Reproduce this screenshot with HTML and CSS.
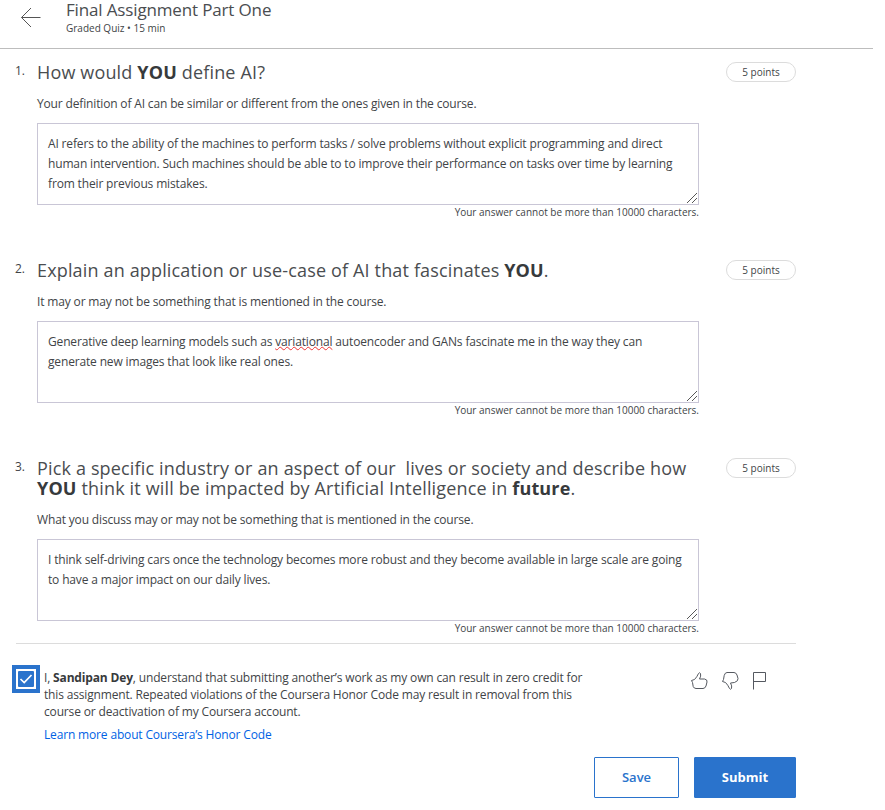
FILE: index.html
```html
<!DOCTYPE html>
<html lang="en">
<head>
<meta charset="utf-8">
<title>Final Assignment Part One</title>
<link rel="stylesheet" href="styles.css">
</head>
<body>
<header class="header">
  <svg class="back" width="22" height="22" viewBox="0 0 22 22"><path d="M20.5 10.500H1.500M11 1L1.500 10.500L11 20"/></svg>
  <div>
    <h1 class="title">Final Assignment Part One</h1>
    <p class="subtitle">Graded Quiz • 15 min</p>
  </div>
</header>
<main class="quiz">
  <section class="question">
    <span class="number">1.</span>
    <div class="body">
      <h2 class="prompt">How would <b>YOU</b> define AI?</h2>
      <p class="hint">Your definition of AI can be similar or different from the ones given in the course.</p>
      <div class="answer">AI refers to the ability of the machines to perform tasks / solve problems without explicit programming and direct<br>human intervention. Such machines should be able to to improve their performance on tasks over time by learning<br>from their previous mistakes.<svg class="grip" width="12" height="12" viewBox="0 0 12 12"><path d="M1 11L11 1M6 11L11 6"/></svg></div>
      <p class="limit">Your answer cannot be more than 10000 characters.</p>
    </div>
    <span class="points">5 points</span>
  </section>
  <section class="question">
    <span class="number">2.</span>
    <div class="body">
      <h2 class="prompt">Explain an application or use-case of AI that fascinates <b>YOU</b>.</h2>
      <p class="hint">It may or may not be something that is mentioned in the course.</p>
      <div class="answer">Generative deep learning models such as <span class="misspelled">variational</span> autoencoder and GANs fascinate me in the way they can<br>generate new images that look like real ones.<svg class="grip" width="12" height="12" viewBox="0 0 12 12"><path d="M1 11L11 1M6 11L11 6"/></svg></div>
      <p class="limit">Your answer cannot be more than 10000 characters.</p>
    </div>
    <span class="points">5 points</span>
  </section>
  <section class="question">
    <span class="number">3.</span>
    <div class="body">
      <h2 class="prompt">Pick a specific industry or an aspect of our &nbsp;lives or society and describe how<br><b>YOU</b> think it will be impacted by Artificial Intelligence in <b>future</b>.</h2>
      <p class="hint">What you discuss may or may not be something that is mentioned in the course.</p>
      <div class="answer">I think self-driving cars once the technology becomes more robust and they become available in large scale are going<br>to have a major impact on our daily lives.<svg class="grip" width="12" height="12" viewBox="0 0 12 12"><path d="M1 11L11 1M6 11L11 6"/></svg></div>
      <p class="limit">Your answer cannot be more than 10000 characters.</p>
    </div>
    <span class="points">5 points</span>
  </section>
</main>
<footer class="footer">
  <div class="honor">
    <svg class="check" width="28" height="28" viewBox="0 0 28 28"><path class="blue" d="M0 0H28V28H0Z"/><path class="white" d="M4 4H24V24H4Z"/><rect class="blue" x="6" y="6" width="16" height="16" rx="1"/><path class="tick" d="M8.500 14L12.200 17.500L19.500 10"/></svg>
    <div class="pledge">
      <p>I, <b>Sandipan Dey</b>, understand that submitting another’s work as my own can result in zero credit for<br>this assignment. Repeated violations of the Coursera Honor Code may result in removal from this<br>course or deactivation of my Coursera account.</p>
      <a class="link">Learn more about Coursera’s Honor Code</a>
    </div>
    <div class="feedback">
      <svg width="17" height="18" viewBox="0 0 17 18"><path d="M.5 8.500L3.500 7.500Q6 5 7.500 1.500Q8.500 0 9.500 1.500Q10.300 4 8.500 7H13.500Q16.500 7.500 16 10L15 14Q14 16.500 12 16.500H5Q3 16.500 2.200 14.500L1.500 10.500Z"/></svg>
      <svg width="17" height="18" viewBox="0 0 17 18"><path d="M.5 9.500L3.500 10.500Q6 13 7.500 16.500Q8.500 18 9.500 16.500Q10.300 14 8.500 11L12.500 10.500Q16.500 9 16 6.500L15 3Q14 .5 12 .5H5Q3 .5 2.200 3.500L1.500 7.500Z"/></svg>
      <svg width="14" height="18" viewBox="0 0 14 18"><path d="M.5 17.500V.5H12.500V9.500H.5"/></svg>
    </div>
  </div>
  <div class="actions">
    <button class="button">Save</button>
    <button class="button primary">Submit</button>
  </div>
</footer>
</body>
</html>
```

FILE: styles.css
```css
* { box-sizing: border-box; }
body { margin: 0; background: #fff; color: #414447; font-family: "Open Sans", sans-serif; }
h1, h2, p { margin: 0; font-weight: 400; }
b { font-weight: 700; color: #373a3c; }
svg { fill: none; flex: none; }
.header { display: flex; width: 873px; height: 49px; border-bottom: 1px solid #bdbdbd; }
.back { margin: 7px 24px 0 20px; stroke: #555; stroke-width: 1; }
.title { font-size: 17px; line-height: 20px; white-space: nowrap; letter-spacing: -.15px; color: #4a4d50; }
.subtitle { font-size: 10px; line-height: 16px; white-space: nowrap; }
.quiz { width: 781px; margin-left: 15px; padding: 13px 0 0 1px; height: 595px; background: linear-gradient(#dcdcdc, #dcdcdc) 1px 100% / 780px 1px no-repeat; }
.question { display: flex; height: 198px; align-items: flex-start; }
.number { width: 22px; margin-left: -1px; font-size: 12px; line-height: 18px; letter-spacing: -.155px; }
.body { width: 662px; white-space: nowrap; }
.prompt { font-size: 18px; line-height: 20px; letter-spacing: .155px; color: #4a4d50; }
.hint { font-size: 12px; line-height: 20px; margin: 12px 0 9px; letter-spacing: -.155px; }
.answer { position: relative; height: 82px; border: 1px solid #c9c6d6; padding: 10px; font-size: 12px; line-height: 20px; letter-spacing: -.155px; }
.grip { position: absolute; right: 0; bottom: 0; stroke: #444; stroke-width: .9; }
.misspelled { text-decoration: underline wavy #e33 .8px; text-underline-offset: 0; text-decoration-skip-ink: none; }
.limit { font-size: 10px; line-height: 14px; text-align: right; }
.points { width: 70px; height: 20px; margin-left: 27px; border: 1px solid #dcdcdc; border-radius: 10px; font-size: 10px; line-height: 19px; text-align: center; }
.footer { width: 796px; padding-left: 12px; }
.honor { display: flex; padding-top: 21px; height: 113px; }
.pledge { width: 651px; padding: 4px 0 0 4px; font-size: 12px; line-height: 17px; white-space: nowrap; letter-spacing: -.16px; }
.link { display: block; margin-top: 6px; color: #0062e4; }
.feedback { display: flex; gap: 14px; padding-top: 7px; }
.feedback svg { stroke: #555960; stroke-width: 1; }
.actions { display: flex; justify-content: flex-end; gap: 15px; }
.button { width: 85px; height: 41px; padding: 0 0 2px; border: 1px solid #2a73cc; border-radius: 1px; background: #fff; color: #2a73cc; font: 600 13px "Open Sans", sans-serif; }
.primary { width: 102px; background: #2a73cc; color: #fff; font-weight: 700; }
.blue { fill: #2a73cc; }
.white { fill: #fff; }
.tick { stroke: #fff; stroke-width: 1.700; }
```
